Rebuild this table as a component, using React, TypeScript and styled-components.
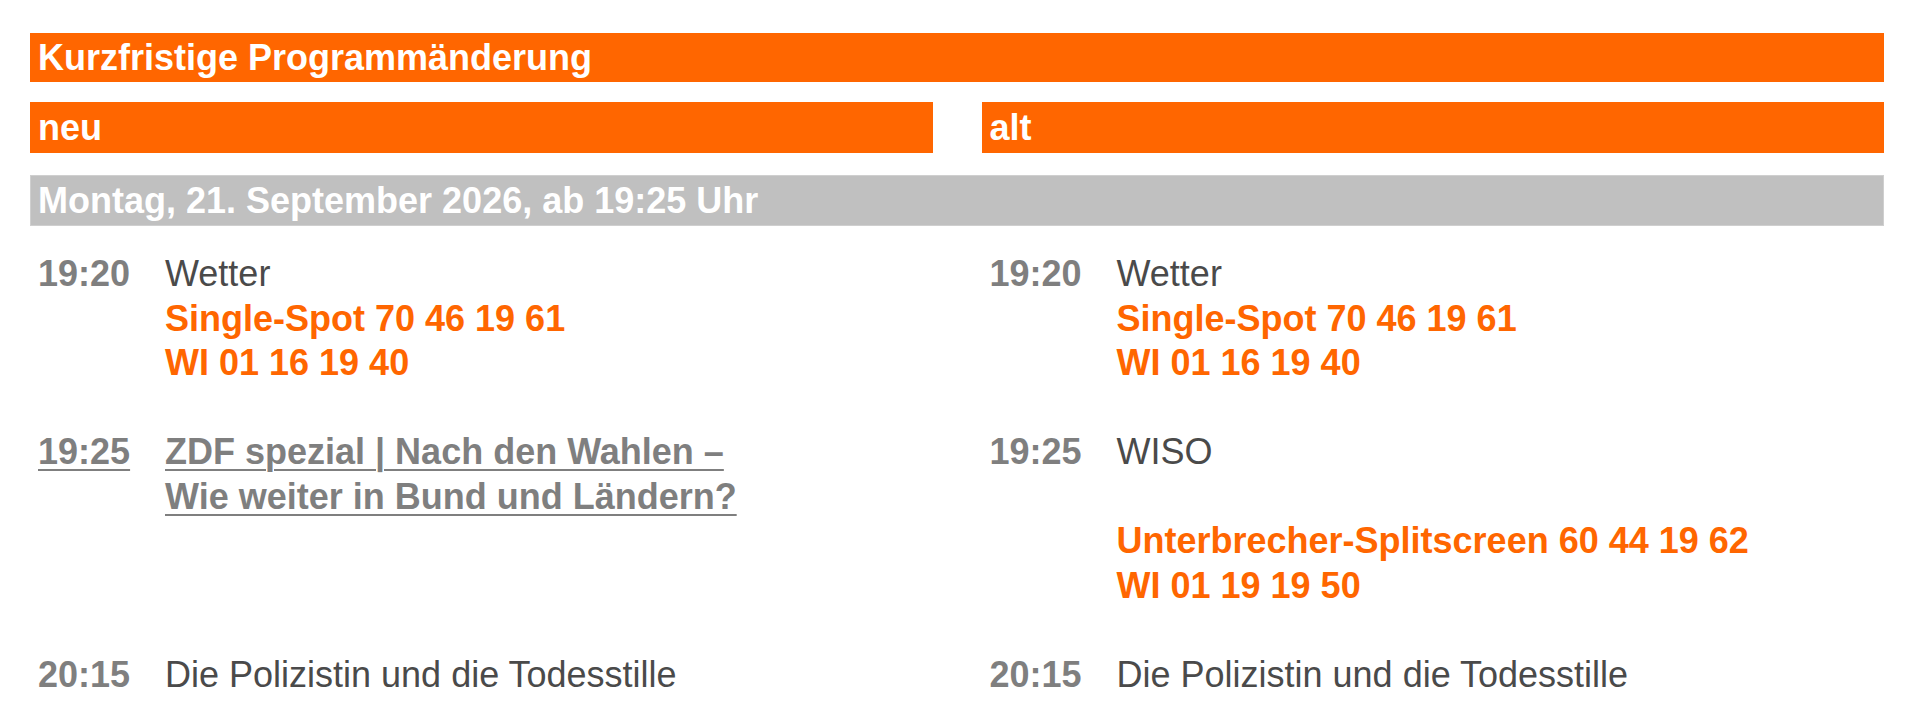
import React from "react";
import styled, { createGlobalStyle } from "styled-components";

const GlobalStyle = createGlobalStyle`
  html, body {
    margin: 0;
    padding: 0;
    background: #ffffff;
  }
  body {
    font-family: "Liberation Sans", Arial, sans-serif;
  }
`;

const ORANGE = "#FF6600";

const Page = styled.div`
  padding: 33px 36px 0 30px;
  font-family: "Liberation Sans", Arial, sans-serif;
  font-size: 36px;
`;

const TitleBar = styled.div`
  height: 49px;
  line-height: 49px;
  background: ${ORANGE};
  color: #ffffff;
  font-weight: 700;
  padding-left: 8px;
  white-space: nowrap;
`;

const Columns = styled.div`
  display: grid;
  grid-template-columns: 1fr 1fr;
  column-gap: 49px;
  margin-top: 20px;
`;

const SectionBar = styled.div`
  height: 51px;
  line-height: 51px;
  background: ${ORANGE};
  color: #ffffff;
  font-weight: 700;
  padding-left: 8px;
`;

const DateBar = styled.div`
  height: 51px;
  line-height: 51px;
  margin-top: 22px;
  background: #c0c0c0;
  color: #ffffff;
  font-weight: 700;
  padding-left: 8px;
  box-shadow: inset 0 0 0 1px #cfcfcf;
`;

const Schedule = styled.div`
  display: grid;
  grid-template-columns: 1fr 1fr;
  column-gap: 49px;
  row-gap: 44.5px;
  margin-top: 26px;
  line-height: 44.5px;
`;

const Entry = styled.div`
  display: grid;
  grid-template-columns: 127px 1fr;
  padding-left: 8px;
  align-items: start;
`;

const Time = styled.div<{ $underline?: boolean }>`
  color: #7f7f7f;
  font-weight: 700;
  text-decoration: ${(p) => (p.$underline ? "underline" : "none")};
  text-decoration-thickness: 2px;
  text-underline-offset: 5px;
`;

const Lines = styled.div`
  display: flex;
  flex-direction: column;
`;

type Variant = "title" | "code" | "changed" | "blank";

const Line = styled.div<{ $variant: Variant }>`
  height: 44.5px;
  white-space: nowrap;
  color: ${(p) =>
    p.$variant === "code" ? ORANGE : p.$variant === "changed" ? "#7f7f7f" : "#4a4a4a"};
  font-weight: ${(p) => (p.$variant === "code" || p.$variant === "changed" ? 700 : 400)};
  text-decoration: ${(p) => (p.$variant === "changed" ? "underline" : "none")};
  text-decoration-thickness: 2px;
  text-underline-offset: 5px;
`;

type Item = { time: string; changed?: boolean; lines: { text: string; variant: Variant }[] };

const rows: [Item, Item][] = [
  [
    {
      time: "19:20",
      lines: [
        { text: "Wetter", variant: "title" },
        { text: "Single-Spot 70 46 19 61", variant: "code" },
        { text: "WI 01 16 19 40", variant: "code" },
      ],
    },
    {
      time: "19:20",
      lines: [
        { text: "Wetter", variant: "title" },
        { text: "Single-Spot 70 46 19 61", variant: "code" },
        { text: "WI 01 16 19 40", variant: "code" },
      ],
    },
  ],
  [
    {
      time: "19:25",
      changed: true,
      lines: [
        { text: "ZDF spezial | Nach den Wahlen –", variant: "changed" },
        { text: "Wie weiter in Bund und Ländern?", variant: "changed" },
      ],
    },
    {
      time: "19:25",
      lines: [
        { text: "WISO", variant: "title" },
        { text: "", variant: "blank" },
        { text: "Unterbrecher-Splitscreen 60 44 19 62", variant: "code" },
        { text: "WI 01 19 19 50", variant: "code" },
      ],
    },
  ],
  [
    {
      time: "20:15",
      lines: [{ text: "Die Polizistin und die Todesstille", variant: "title" }],
    },
    {
      time: "20:15",
      lines: [{ text: "Die Polizistin und die Todesstille", variant: "title" }],
    },
  ],
];

const ScheduleEntry: React.FC<{ item: Item }> = ({ item }) => (
  <Entry>
    <Time $underline={item.changed}>{item.time}</Time>
    <Lines>
      {item.lines.map((l, i) => (
        <Line key={i} $variant={l.variant}>
          {l.text}
        </Line>
      ))}
    </Lines>
  </Entry>
);

export default function App() {
  return (
    <>
      <GlobalStyle />
      <Page>
        <TitleBar>Kurzfristige Programmänderung</TitleBar>
        <Columns>
          <SectionBar>neu</SectionBar>
          <SectionBar>alt</SectionBar>
        </Columns>
        <DateBar>Montag, 21. September 2026, ab 19:25 Uhr</DateBar>
        <Schedule>
          {rows.map(([left, right], i) => (
            <React.Fragment key={i}>
              <ScheduleEntry item={left} />
              <ScheduleEntry item={right} />
            </React.Fragment>
          ))}
        </Schedule>
      </Page>
    </>
  );
}
